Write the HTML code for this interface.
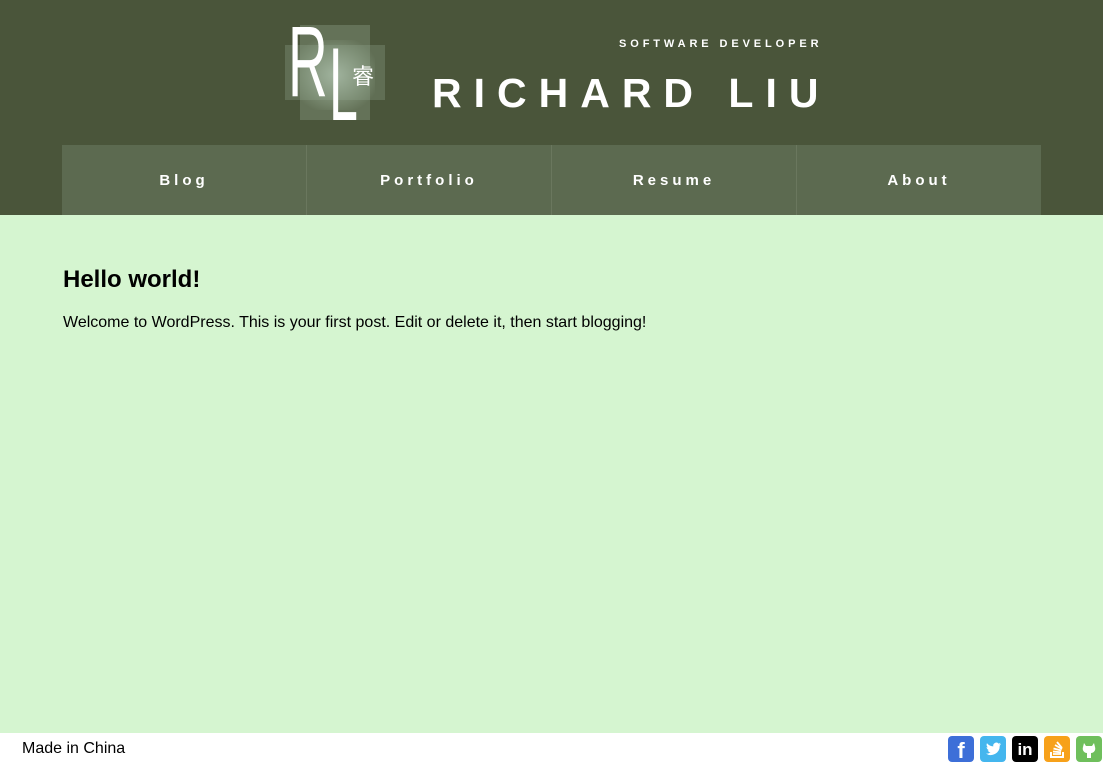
<!DOCTYPE html>
<html><head><meta charset="utf-8"><style>
*{margin:0;padding:0;box-sizing:border-box}
body{width:1103px;height:765px;overflow:hidden;font-family:"Liberation Sans",Arial,sans-serif;background:#fff;position:relative}
.hdr{position:absolute;left:0;top:0;width:1103px;height:215px;background:#4a553a}
.nav{position:absolute;left:62px;top:145px;width:979px;height:70px;display:flex;background:#5c6a50}
.nav div{flex:1;color:#fff;font-weight:bold;font-size:15px;letter-spacing:4px;text-align:center;line-height:72px;border-right:1px solid #6a775e}
.nav div:last-child{border-right:none}
.main{position:absolute;left:0;top:215px;width:1103px;height:518px;background:#d5f5d0}
h1{position:absolute;left:63px;top:266px;font-size:24px;font-weight:bold}
p.t{position:absolute;left:63px;top:314px;font-size:16px}
.foot{position:absolute;left:22px;top:740px;font-size:16px}
.ic{position:absolute;top:736px;width:26px;height:26px;border-radius:4px;color:#fff;font-weight:bold;text-align:center}
</style></head><body>
<div class="hdr">
 <div style="position:absolute;left:300px;top:25px;width:70px;height:95px;background:rgba(150,170,145,.35)"></div>
 <div style="position:absolute;left:285px;top:45px;width:100px;height:55px;background:rgba(150,170,145,.3)"></div>
 <div style="position:absolute;left:295px;top:40px;width:80px;height:70px;background:radial-gradient(ellipse at center,rgba(180,200,180,.7),rgba(150,170,145,.3) 60%,rgba(74,85,58,0) 80%)"></div>
 <div style="position:absolute;left:288px;top:12px;font-size:100px;color:#fff;line-height:1;transform:scaleX(.55);transform-origin:left">R</div>
 <div style="position:absolute;left:329px;top:33px;font-size:104px;color:#fff;line-height:1;transform:scaleX(.5);transform-origin:left">L</div>
 <div style="position:absolute;left:352px;top:64px;font-size:22px;color:#fff;font-family:'Noto Sans CJK SC',sans-serif;line-height:1">睿</div>
 <div style="position:absolute;left:619px;top:38px;font-size:11px;font-weight:bold;color:#fff;letter-spacing:3.9px">SOFTWARE DEVELOPER</div>
 <div style="position:absolute;left:432px;top:70px;font-size:41px;font-weight:bold;color:#fff;letter-spacing:12px">RICHARD LIU</div>
 <div class="nav"><div>Blog</div><div>Portfolio</div><div>Resume</div><div>About</div></div>
</div>
<div class="main"></div>
<h1>Hello world!</h1>
<p class="t">Welcome to WordPress. This is your first post. Edit or delete it, then start blogging!</p>
<div class="foot">Made in China</div>
<div class="ic" style="left:948px;background:#3d6fd8;font-size:22px;line-height:30px">f</div>
<div class="ic" style="left:980px;background:#44b6ee"><svg width="26" height="26" viewBox="0 0 26 26"><path d="M21 8c-.6.3-1.2.4-1.8.5.7-.4 1.1-1 1.4-1.7-.6.4-1.3.6-2 .8a3.1 3.1 0 0 0-5.3 2.8C10.700 10.300 8.500 9.100 7 7.300c-.8 1.400-.3 3.200 1 4.100-.5 0-1-.2-1.400-.4 0 1.500 1.100 2.800 2.500 3.100-.5.1-1 .2-1.400.1.4 1.200 1.600 2.100 2.900 2.100A6.300 6.300 0 0 1 6 17.600 8.900 8.900 0 0 0 19.700 10v-.4c.6-.4 1-.9 1.300-1.600z" fill="#fff"/></svg></div>
<div class="ic" style="left:1012px;background:#000;font-size:17px;line-height:27px">in</div>
<div class="ic" style="left:1044px;background:#f7a11a"><svg width="26" height="26"><path d="M7 16v5h12v-5" stroke="#fff" stroke-width="2" fill="none"/><path d="M9 18h8M9 15.5l8 .8M9.5 12.5l7.8 2M11 9l7 4M13 6l5 6" stroke="#fff" stroke-width="1.8"/></svg></div>
<div class="ic" style="left:1076px;background:#6fbf5c"><svg width="26" height="26"><path d="M8 7l2 3h6l2-3 1 4c1 3-1 6-4 6v5h-4v-5c-3 0-5-3-4-6z" fill="#fff"/></svg></div>
</body></html>
